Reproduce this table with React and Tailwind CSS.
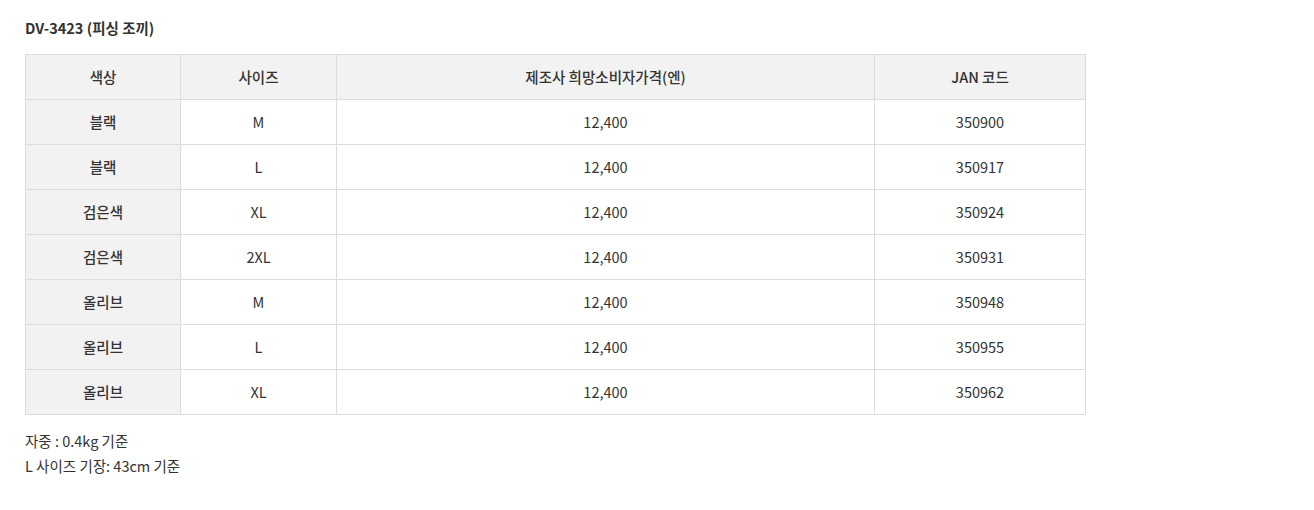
const rows = [
  ['블랙', 'M', '12,400', '350900'],
  ['블랙', 'L', '12,400', '350917'],
  ['검은색', 'XL', '12,400', '350924'],
  ['검은색', '2XL', '12,400', '350931'],
  ['올리브', 'M', '12,400', '350948'],
  ['올리브', 'L', '12,400', '350955'],
  ['올리브', 'XL', '12,400', '350962'],
];

const font = { fontFamily: '"Noto Sans CJK KR", "Noto Sans", sans-serif' };

export default function App() {
  return (
    <div className="min-h-screen bg-white px-[25px] pt-[17px] text-[14.5px] text-[#333]" style={font}>
      <h2 className="text-[14.5px] font-bold leading-[22px] text-[#333]">DV-3423 (피싱 조끼)</h2>
      <table className="mt-[15px] w-[1060px] table-fixed border-collapse">
        <colgroup>
          <col className="w-[155px]" />
          <col className="w-[156px]" />
          <col className="w-[538px]" />
          <col className="w-[211px]" />
        </colgroup>
        <thead>
          <tr className="h-[45px] bg-[#f2f2f2]">
            {['색상', '사이즈', '제조사 희망소비자가격(엔)', 'JAN 코드'].map((h) => (
              <th key={h} className="border border-[#dcdcdc] text-center font-medium">{h}</th>
            ))}
          </tr>
        </thead>
        <tbody>
          {rows.map((r, i) => (
            <tr key={i} className="h-[45px]">
              <td className="border border-[#dcdcdc] bg-[#f2f2f2] text-center font-medium">{r[0]}</td>
              <td className="border border-[#dcdcdc] text-center">{r[1]}</td>
              <td className="border border-[#dcdcdc] text-center">{r[2]}</td>
              <td className="border border-[#dcdcdc] text-center">{r[3]}</td>
            </tr>
          ))}
        </tbody>
      </table>
      <div className="mt-[13px] leading-[25px]">
        <p>자중 : 0.4kg 기준</p>
        <p>L 사이즈 기장: 43cm 기준</p>
      </div>
    </div>
  );
}
